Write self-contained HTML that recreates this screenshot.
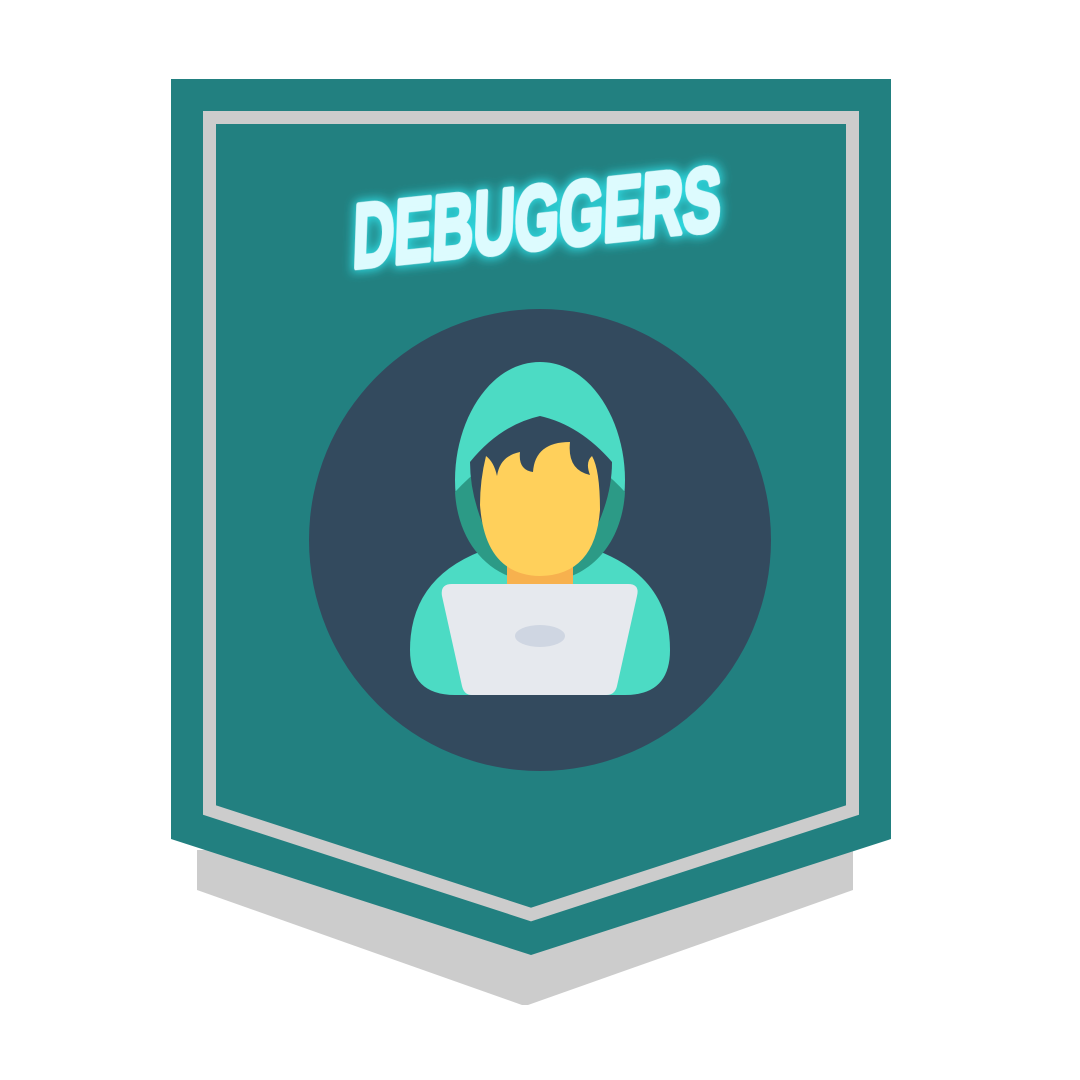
<!DOCTYPE html>
<html><head><meta charset="utf-8"><style>
html,body{margin:0;padding:0;background:#fff;}
svg{display:block;}
</style></head><body>
<svg width="1080" height="1080" viewBox="0 0 1080 1080" xmlns="http://www.w3.org/2000/svg">
<defs>
<filter id="glow" x="-20%" y="-60%" width="140%" height="220%">
<feMorphology in="SourceAlpha" operator="dilate" radius="2" result="d"/>
<feGaussianBlur in="d" stdDeviation="5" result="b"/>
<feFlood flood-color="#2fe0e8" flood-opacity="0.9"/>
<feComposite in2="b" operator="in" result="g"/>
<feMerge><feMergeNode in="g"/><feMergeNode in="SourceGraphic"/></feMerge>
</filter>
<filter id="soft" x="-20%" y="-50%" width="140%" height="200%"><feGaussianBlur stdDeviation="14"/></filter>
<clipPath id="lower"><path d="M440 600 L440 490 Q540 400 640 490 L640 600 Z"/></clipPath>
</defs>
<polygon points="197,850 853,850 853,890 528,1005 522,1005 197,890" fill="#cccccc"/>
<polygon points="171,79 891,79 891,839 531,955 171,839" fill="#228080"/>
<polygon points="209.5,117.5 852.5,117.5 852.5,810 531,914.5 209.5,810" fill="#228080" stroke="#cccccc" stroke-width="13"/>
<g transform="translate(352,268) rotate(-6) skewX(-8)" filter="url(#glow)">
<text x="0" y="0" textLength="370" lengthAdjust="spacingAndGlyphs" font-family="'Liberation Sans',sans-serif" font-weight="bold" font-size="86" fill="#ddfbfe" stroke="#ddfbfe" stroke-width="5" stroke-linejoin="round" transform="scale(1,1.05)">DEBUGGERS</text>
</g>
<circle cx="540" cy="540" r="231" fill="#334a5e"/>
<path d="M410 650 Q410 570 500 545 L580 545 Q670 570 670 650 Q670 695 625 695 L455 695 Q410 695 410 650 Z" fill="#4cdbc4"/>
<path d="M540 362 C590 362 625 420 625 480 C625 540 590 582 540 582 C490 582 455 540 455 480 C455 420 490 362 540 362 Z" fill="#4cdbc4"/>
<path d="M455 492 Q540 400 625 492 C622 545 588 582 540 582 C492 582 458 545 455 492 Z" fill="#2c9a86"/>
<path d="M470 462 Q500 425 540 416 Q580 425 612 462 Q612 500 590 540 L490 540 Q470 500 470 462 Z" fill="#334a5e"/>
<rect x="507" y="548" width="66" height="40" fill="#f7b14e"/>
<path d="M486 456 Q494 462 497 476 Q500 456 520 452 Q518 470 533 472 Q535 442 570 442 Q567 470 590 475 Q585 462 592 456 Q600 470 600 510 Q595 575 540 576 Q485 575 480 505 Q480 480 486 456 Z" fill="#ffd05b"/>
<path d="M452 584 L628 584 Q640 584 637 596 L617 686 Q615 695 606 695 L472 695 Q464 695 462 686 L442 596 Q440 584 452 584 Z" fill="#e6e9ee"/>
<ellipse cx="540" cy="636" rx="25" ry="11" fill="#cfd6e2"/>
</svg>
</body></html>
